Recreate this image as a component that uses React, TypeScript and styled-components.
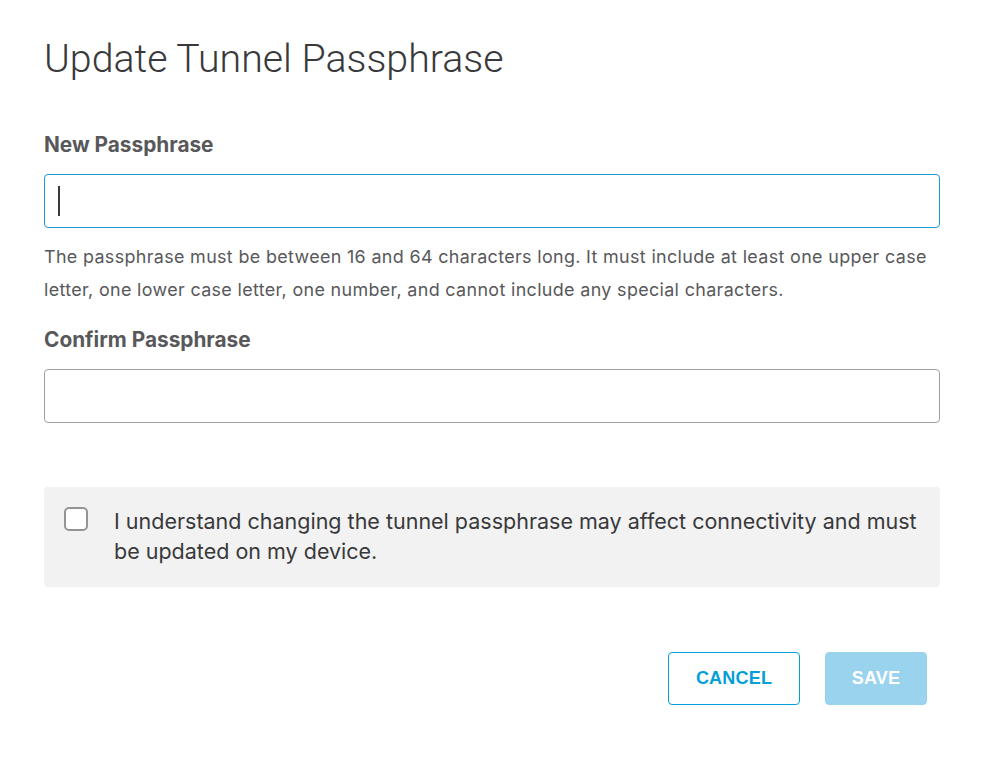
import React from "react";
import styled, { createGlobalStyle } from "styled-components";

const Global = createGlobalStyle`
  html, body { margin: 0; padding: 0; background: #fff; }
  body { font-family: Inter, "Liberation Sans", Arial, sans-serif; }
  * { box-sizing: border-box; }
`;

const Page = styled.div`
  width: 984px;
  padding: 37px 44px 0 44px;
  display: flex;
  flex-direction: column;
`;

const Title = styled.h1`
  margin: 0;
  font-family: Roboto, "Liberation Sans", sans-serif;
  font-weight: 300;
  font-size: 39.3px;
  line-height: 44px;
  color: #39393b;
`;

const Field = styled.div<{ $top: number }>`
  display: flex;
  flex-direction: column;
  margin-top: ${(p) => p.$top}px;
  width: 896px;
`;

const Label = styled.label`
  font-family: Inter, "Liberation Sans", sans-serif;
  font-weight: 700;
  font-size: 20.8px;
  line-height: 22px;
  color: #58585b;
  margin-bottom: 17.5px;
`;

const Input = styled.div<{ $focused?: boolean }>`
  height: 54px;
  border: 1px solid ${(p) => (p.$focused ? "#1e9ad4" : "#9e9ea2")};
  border-radius: 4px;
  display: flex;
  align-items: center;
  padding-left: 13px;
`;

const Caret = styled.span`
  width: 2px;
  height: 30px;
  background: #39393b;
`;

const Help = styled.p`
  margin: 12px 0 0 0;
  font-size: 17.9px;
  line-height: 33px;
  letter-spacing: 0.35px;
  color: #58585b;
`;

const Notice = styled.div`
  margin-top: 64px;
  width: 896px;
  height: 100px;
  background: #f2f2f2;
  border-radius: 4px;
  display: flex;
  align-items: flex-start;
  padding: 20px 10px 0 20px;
  gap: 26px;
`;

const Box = styled.span`
  flex: none;
  width: 24px;
  height: 24px;
  border: 2px solid #949497;
  border-radius: 5px;
  background: #fff;
`;

const NoticeText = styled.div`
  font-size: 21.5px;
  line-height: 30px;
  color: #39393b;
  margin-top: -1px;
`;

const Actions = styled.div`
  margin-top: 65px;
  width: 883px;
  display: flex;
  justify-content: flex-end;
  gap: 25px;
`;

const Button = styled.button<{ $primary?: boolean; $w: number }>`
  width: ${(p) => p.$w}px;
  height: 53px;
  border-radius: 4px;
  font-family: "Liberation Sans", Arial, sans-serif;
  font-weight: 700;
  font-size: 18px;
  letter-spacing: 0.2px;
  border: 1px solid ${(p) => (p.$primary ? "#9ad3ee" : "#049fd9")};
  background: ${(p) => (p.$primary ? "#9ad3ee" : "#fff")};
  color: ${(p) => (p.$primary ? "#fff" : "#049fd9")};
  padding: 0;
`;

export default function App() {
  return (
    <>
      <Global />
      <Page>
        <Title>Update Tunnel Passphrase</Title>
        <Field $top={53}>
          <Label>New Passphrase</Label>
          <Input $focused>
            <Caret />
          </Input>
          <Help>
            The passphrase must be between 16 and 64 characters long. It must include at least one upper case
            letter, one lower case letter, one number, and cannot include any special characters.
          </Help>
        </Field>
        <Field $top={23.5}>
          <Label>Confirm Passphrase</Label>
          <Input />
        </Field>
        <Notice>
          <Box />
          <NoticeText>
            I understand changing the tunnel passphrase may affect connectivity and must be updated on my device.
          </NoticeText>
        </Notice>
        <Actions>
          <Button $w={132}>CANCEL</Button>
          <Button $primary $w={102}>SAVE</Button>
        </Actions>
      </Page>
    </>
  );
}
